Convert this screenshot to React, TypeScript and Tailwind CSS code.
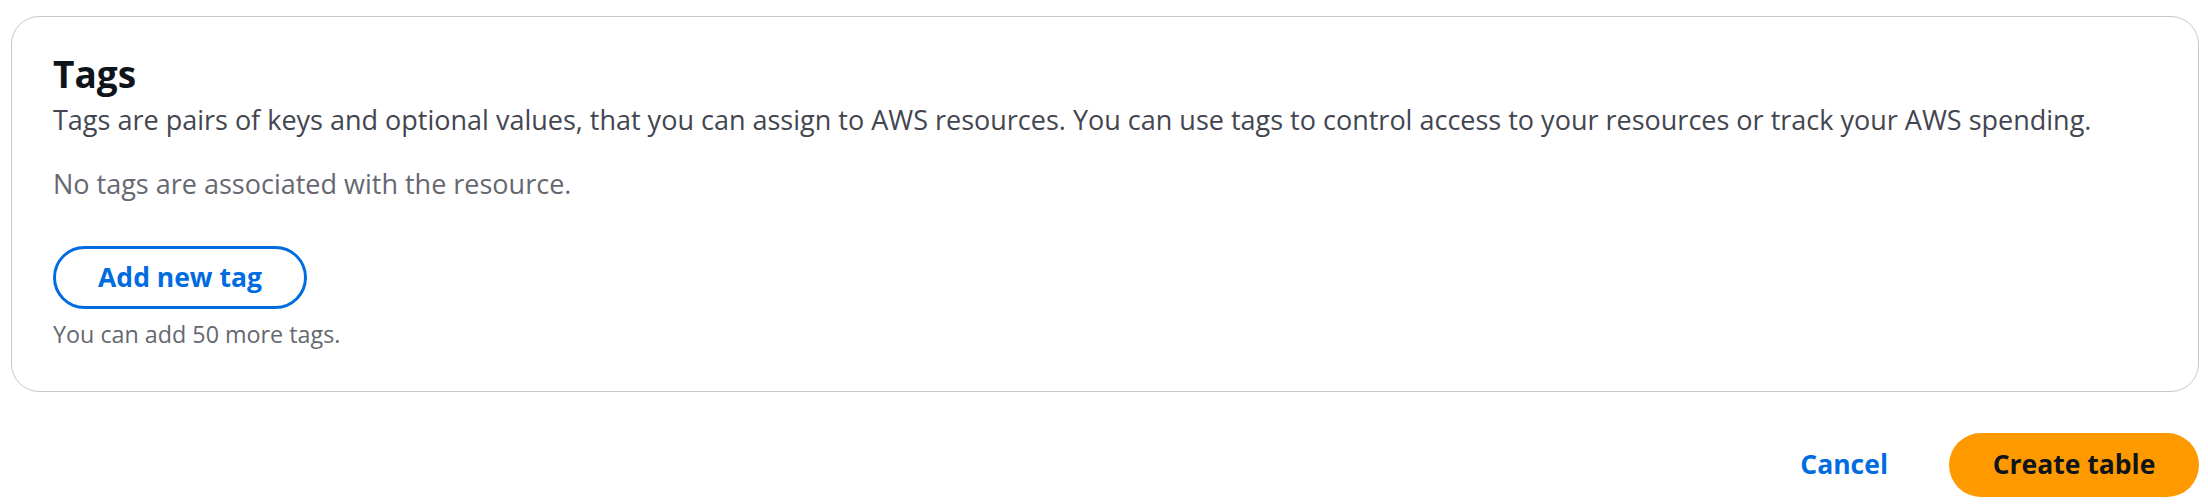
export default function App() {
  return (
    <div
      className="min-h-[504px] bg-white pt-[16px] pl-[11px] pr-[9px]"
      style={{ fontFamily: '"Open Sans", "Noto Sans", sans-serif' }}
    >
      {/* Tags container */}
      <section className="rounded-[28px] border border-[#c6c6cd] bg-white pt-[34px] pb-[42px] pl-[41px] pr-[40px]">
        <h2 className="text-[37px] leading-[46px] font-bold text-[#0f141a]">Tags</h2>
        <p className="mt-[4px] text-[27px] leading-[38px] text-[#424650]">
          Tags are pairs of keys and optional values, that you can assign to AWS resources. You can use tags to control access to your resources or track your AWS spending.
        </p>
        <p className="mt-[26px] text-[27px] leading-[38px] text-[#656871]">
          No tags are associated with the resource.
        </p>
        <button className="mt-[43px] flex h-[63px] w-[254px] items-center justify-center rounded-full border-[3px] border-[#006ce0] bg-white text-[26.5px] font-bold text-[#006ce0]">
          Add new tag
        </button>
        <p className="mt-[10px] text-[23.3px] leading-[30px] text-[#656871]">You can add 50 more tags.</p>
      </section>

      {/* Form actions */}
      <div className="mt-[41px] flex items-center justify-end gap-[23px]">
        <button className="flex h-[64px] items-center px-[38px] text-[26.5px] font-bold text-[#006ce0]">Cancel</button>
        <button className="flex h-[64px] w-[250px] items-center justify-center rounded-full bg-[#ff9900] text-[26.5px] font-bold text-[#0f141a]">
          Create table
        </button>
      </div>
    </div>
  );
}
